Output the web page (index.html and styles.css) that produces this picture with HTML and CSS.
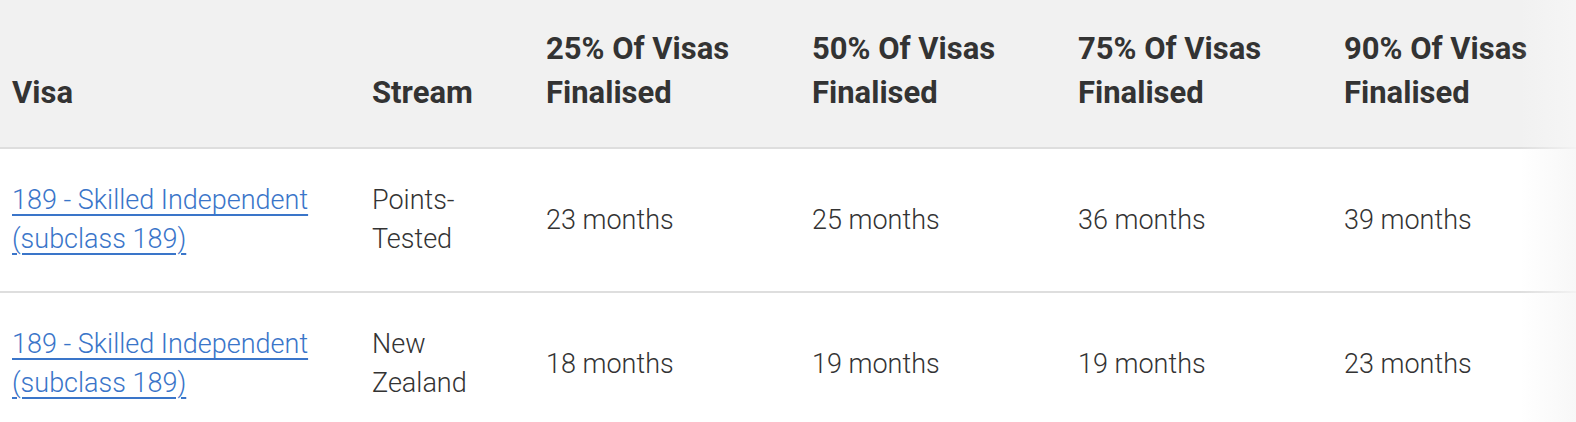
FILE: index.html
```html
<!DOCTYPE html>
<html lang="en">
<head>
<meta charset="utf-8">
<title>Visa processing times</title>
<link rel="stylesheet" href="styles.css">
</head>
<body>
<div class="table-wrap">
  <table class="times">
    <colgroup>
      <col class="c-visa"><col class="c-stream"><col class="c-p"><col class="c-p"><col class="c-p"><col class="c-last">
    </colgroup>
    <thead>
      <tr>
        <th>Visa</th>
        <th>Stream</th>
        <th>25% Of Visas Finalised</th>
        <th>50% Of Visas Finalised</th>
        <th>75% Of Visas Finalised</th>
        <th>90% Of Visas Finalised</th>
      </tr>
    </thead>
    <tbody>
      <tr>
        <td><a href="#">189 - Skilled Independent (subclass 189)</a></td>
        <td>Points-Tested</td>
        <td>23 months</td>
        <td>25 months</td>
        <td>36 months</td>
        <td>39 months</td>
      </tr>
      <tr>
        <td><a href="#">189 - Skilled Independent (subclass 189)</a></td>
        <td>New Zealand</td>
        <td>18 months</td>
        <td>19 months</td>
        <td>19 months</td>
        <td>23 months</td>
      </tr>
    </tbody>
  </table>
  <div class="fade"></div>
</div>
</body>
</html>
```

FILE: styles.css
```css
html, body {
  margin: 0;
  padding: 0;
  background: #fff;
}
body {
  font-family: Roboto, "Liberation Sans", sans-serif;
  color: #333;
  overflow: hidden;
}
.table-wrap {
  position: relative;
  width: 1576px;
  overflow: hidden;
}
.times {
  border-collapse: collapse;
  table-layout: fixed;
  width: 1576px;
}
.c-visa { width: 360px; }
.c-stream { width: 174px; }
.c-p { width: 266px; }
.c-last { width: 244px; }
.times th {
  background: #f1f1f1;
  font-weight: 700;
  font-size: 31px;
  line-height: 44px;
  text-align: left;
  vertical-align: bottom;
  padding: 27px 12px 32px;
  border-bottom: 2px solid #dedede;
}
.times th:nth-child(2) { padding-right: 0; }
.times td {
  font-size: 27px;
  line-height: 39px;
  font-weight: 300;
  vertical-align: middle;
  padding: 32px 12px 32px;
  border-bottom: 2px solid #dedede;
}
.times td:nth-child(2) { padding-right: 30px; }
.times a {
  color: #3a75c9;
  text-decoration: underline;
  text-decoration-thickness: 2px;
  text-underline-offset: 5px;
}
.fade {
  position: absolute;
  top: 0;
  right: 0;
  bottom: 0;
  width: 56px;
  background: linear-gradient(to right, rgba(246,246,246,0), rgba(246,246,246,0.85));
  pointer-events: none;
}
```
